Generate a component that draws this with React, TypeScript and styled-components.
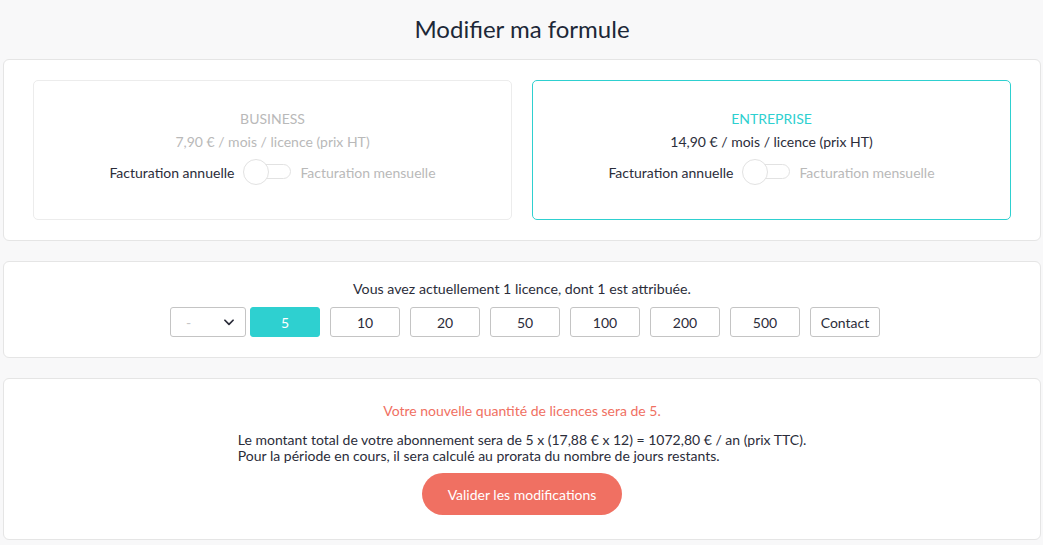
import styled, { createGlobalStyle } from 'styled-components';

const teal = '#2ed0d0';
const coral = '#f07062';
const ink = '#2b2d3a';
const muted = '#b9b9b9';
const line = '#e5e5e5';

const GlobalStyle = createGlobalStyle`
  body {
    margin: 0;
    background: #f8f8f9;
    font-family: Lato, "Noto Sans", sans-serif;
    color: ${ink};
  }
`;

const Page = styled.div`
  width: 1043px;
  padding: 0 2px 0 3px;
  box-sizing: border-box;
`;

const Title = styled.h1`
  margin: 0;
  height: 56px;
  padding-bottom: 3px;
  display: flex;
  align-items: center;
  justify-content: center;
  font-size: 24px;
  font-weight: 400;
  color: #1d2838;
`;

const Panel = styled.section<{ $pad: string }>`
  background: #fff;
  border: 1px solid ${line};
  border-radius: 6px;
  padding: ${p => p.$pad};
  margin-bottom: 20px;
  text-align: center;
`;

const PlanGrid = styled.div`
  display: grid;
  grid-template-columns: 1fr 1fr;
  gap: 20px;
`;

const PlanCard = styled.div<{ $active?: boolean }>`
  height: 140px;
  box-sizing: border-box;
  border: 1px solid ${p => (p.$active ? teal : '#ececec')};
  border-radius: 5px;
  padding-top: 27px;
  display: flex;
  flex-direction: column;
  align-items: center;
`;

const PlanName = styled.div<{ $active?: boolean }>`
  font-size: 14px;
  line-height: 22px;
  color: ${p => (p.$active ? teal : muted)};
  text-transform: uppercase;
`;

const PlanPrice = styled.div<{ $active?: boolean }>`
  font-size: 14px;
  line-height: 24px;
  color: ${p => (p.$active ? ink : muted)};
`;

const BillingRow = styled.div`
  display: flex;
  align-items: center;
  gap: 9px;
  margin-top: 5px;
  font-size: 14px;
`;

const BillingLabel = styled.span<{ $off?: boolean }>`
  color: ${p => (p.$off ? muted : ink)};
`;

const Switch = styled.span`
  position: relative;
  width: 48px;
  height: 26px;
  display: inline-block;

  &::before {
    content: '';
    position: absolute;
    left: 6px;
    right: 0;
    top: 5px;
    height: 15px;
    border: 1px solid #e2e2e2;
    border-radius: 9px;
    box-sizing: border-box;
  }

  &::after {
    content: '';
    position: absolute;
    left: 0;
    top: 0;
    width: 26px;
    height: 26px;
    border-radius: 50%;
    background: #fff;
    border: 1px solid #e2e2e2;
    box-sizing: border-box;
  }
`;

const Info = styled.p`
  margin: 0 0 8px;
  font-size: 14.2px;
  line-height: 20px;
`;

const QtyRow = styled.div`
  display: flex;
  justify-content: center;
  gap: 10px;
  padding-left: 6px;
`;

const Select = styled.div`
  width: 76px;
  height: 30px;
  box-sizing: border-box;
  border: 1px solid #c4c4c4;
  border-radius: 3px;
  display: flex;
  align-items: center;
  justify-content: space-between;
  padding: 0 9px 0 15px;
  margin-right: -6px;
  color: #c6c6c6;
  font-size: 14px;
`;

const QtyButton = styled.button<{ $selected?: boolean }>`
  width: 70px;
  height: 30px;
  border-radius: 3px;
  border: 1px solid ${p => (p.$selected ? teal : '#c4c4c4')};
  background: ${p => (p.$selected ? teal : '#fff')};
  color: ${p => (p.$selected ? '#fff' : ink)};
  font-family: inherit;
  font-size: 14px;
  padding: 0;
`;

const Notice = styled.p`
  margin: 0 0 11px;
  font-size: 14px;
  line-height: 20px;
  color: ${coral};
`;

const Summary = styled.p`
  display: inline-block;
  margin: 0 0 9px;
  font-size: 14px;
  line-height: 16px;
  text-align: left;
`;

const Actions = styled.div`
  display: flex;
  justify-content: center;
`;

const Submit = styled.button`
  width: 200px;
  height: 42px;
  border: none;
  border-radius: 21px;
  background: ${coral};
  color: #fff;
  font-family: inherit;
  font-size: 14px;
`;

const plans = [
  { name: 'Business', price: '7,90 € / mois / licence (prix HT)', active: false },
  { name: 'Entreprise', price: '14,90 € / mois / licence (prix HT)', active: true },
];

const quantities = ['5', '10', '20', '50', '100', '200', '500', 'Contact'];

export default function App() {
  return (
    <Page>
      <GlobalStyle />
      <Title>Modifier ma formule</Title>

      <Panel $pad="20px 29px">
        <PlanGrid>
          {plans.map(plan => (
            <PlanCard key={plan.name} $active={plan.active}>
              <PlanName $active={plan.active}>{plan.name}</PlanName>
              <PlanPrice $active={plan.active}>{plan.price}</PlanPrice>
              <BillingRow>
                <BillingLabel>Facturation annuelle</BillingLabel>
                <Switch />
                <BillingLabel $off>Facturation mensuelle</BillingLabel>
              </BillingRow>
            </PlanCard>
          ))}
        </PlanGrid>
      </Panel>

      <Panel $pad="17px 20px 20px">
        <Info>Vous avez actuellement 1 licence, dont 1 est attribuée.</Info>
        <QtyRow>
          <Select>
            <span>-</span>
            <svg width="14" height="14" viewBox="0 0 24 24" fill="none" stroke="#2b2d3a" strokeWidth="3" strokeLinecap="round" strokeLinejoin="round">
              <path d="M5 9l7 7 7-7" />
            </svg>
          </Select>
          {quantities.map(q => (
            <QtyButton key={q} $selected={q === '5'}>
              {q}
            </QtyButton>
          ))}
        </QtyRow>
      </Panel>

      <Panel $pad="22px 20px 24px">
        <Notice>Votre nouvelle quantité de licences sera de 5.</Notice>
        <Summary>
          Le montant total de votre abonnement sera de 5 x (17,88 € x 12) = 1072,80 € / an (prix TTC).
          <br />
          Pour la période en cours, il sera calculé au prorata du nombre de jours restants.
        </Summary>
        <Actions>
          <Submit>Valider les modifications</Submit>
        </Actions>
      </Panel>
    </Page>
  );
}
